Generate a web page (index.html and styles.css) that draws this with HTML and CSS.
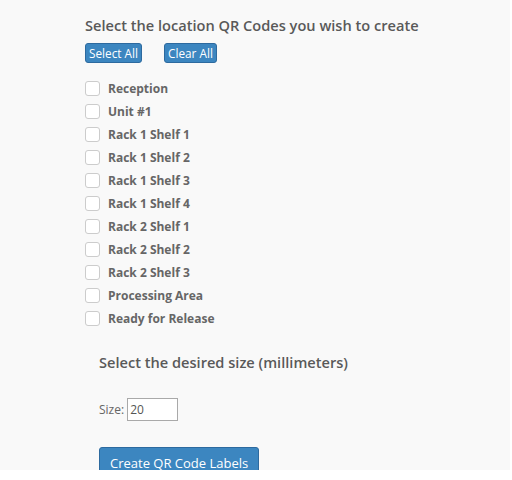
FILE: index.html
```html
<!DOCTYPE html>
<html>
<head>
<meta charset="utf-8">
<link rel="stylesheet" href="styles.css">
</head>
<body>
<div class="page">
  <section class="locations">
    <h2 class="title">Select the location QR Codes you wish to create</h2>
    <div class="actions">
      <button class="btn btn-sm">Select All</button>
      <button class="btn btn-sm">Clear All</button>
    </div>
    <ul class="checklist">
      <li><label><span class="box"></span>Reception</label></li>
      <li><label><span class="box"></span>Unit #1</label></li>
      <li><label><span class="box"></span>Rack 1 Shelf 1</label></li>
      <li><label><span class="box"></span>Rack 1 Shelf 2</label></li>
      <li><label><span class="box"></span>Rack 1 Shelf 3</label></li>
      <li><label><span class="box"></span>Rack 1 Shelf 4</label></li>
      <li><label><span class="box"></span>Rack 2 Shelf 1</label></li>
      <li><label><span class="box"></span>Rack 2 Shelf 2</label></li>
      <li><label><span class="box"></span>Rack 2 Shelf 3</label></li>
      <li><label><span class="box"></span>Processing Area</label></li>
      <li><label><span class="box"></span>Ready for Release</label></li>
    </ul>
  </section>
  <section class="sizing">
    <h2 class="title">Select the desired size (millimeters)</h2>
    <div class="size-row">
      <span class="size-label">Size:</span>
      <span class="size-input">20</span>
    </div>
    <button class="btn btn-lg">Create QR Code Labels</button>
  </section>
</div>
</body>
</html>
```

FILE: styles.css
```css
html, body {
  margin: 0;
  padding: 0;
  background: #ffffff;
}

.page {
  width: 510px;
  height: 470px;
  overflow: hidden;
  background: #f9f9f9;
  font-family: "Open Sans", "Noto Sans", sans-serif;
  color: #666666;
  box-sizing: border-box;
  padding-left: 85px;
}

.title {
  margin: 0;
  font-size: 14.6px;
  font-weight: 600;
  line-height: 20px;
  color: #595959;
}

.locations {
  padding-top: 15px;
}

.actions {
  display: flex;
  gap: 22px;
  margin-top: 8px;
}

.btn {
  font-family: "Open Sans", "Noto Sans", sans-serif;
  color: #ffffff;
  background: #3c86c0;
  border: 1px solid #2d6a9f;
  border-radius: 3px;
  cursor: pointer;
}

.btn-sm {
  font-size: 11.8px;
  line-height: 17px;
  height: 20px;
  padding: 0 3px;
}

.checklist {
  list-style: none;
  margin: 14px 0 0 0;
  padding: 0;
}

.checklist li {
  height: 23px;
  display: flex;
  align-items: center;
}

.checklist label {
  display: flex;
  align-items: center;
  gap: 8px;
  font-size: 12px;
  font-weight: 700;
  color: #666666;
}

.box {
  width: 15px;
  height: 15px;
  box-sizing: border-box;
  background: #ffffff;
  border: 1px solid #cccccc;
  border-radius: 3px;
}

.sizing {
  padding-left: 14px;
  margin-top: 22px;
}

.size-row {
  display: flex;
  align-items: center;
  gap: 3px;
  margin-top: 26px;
  font-size: 12px;
}

.size-input {
  width: 51px;
  height: 23px;
  box-sizing: border-box;
  border: 1px solid #a9a9a9;
  background: #ffffff;
  color: #555555;
  font-size: 12px;
  line-height: 21px;
  padding-left: 2px;
}

.btn-lg {
  margin-top: 26px;
  font-size: 13px;
  line-height: 20px;
  height: 32px;
  padding: 0 10px;
}
```
